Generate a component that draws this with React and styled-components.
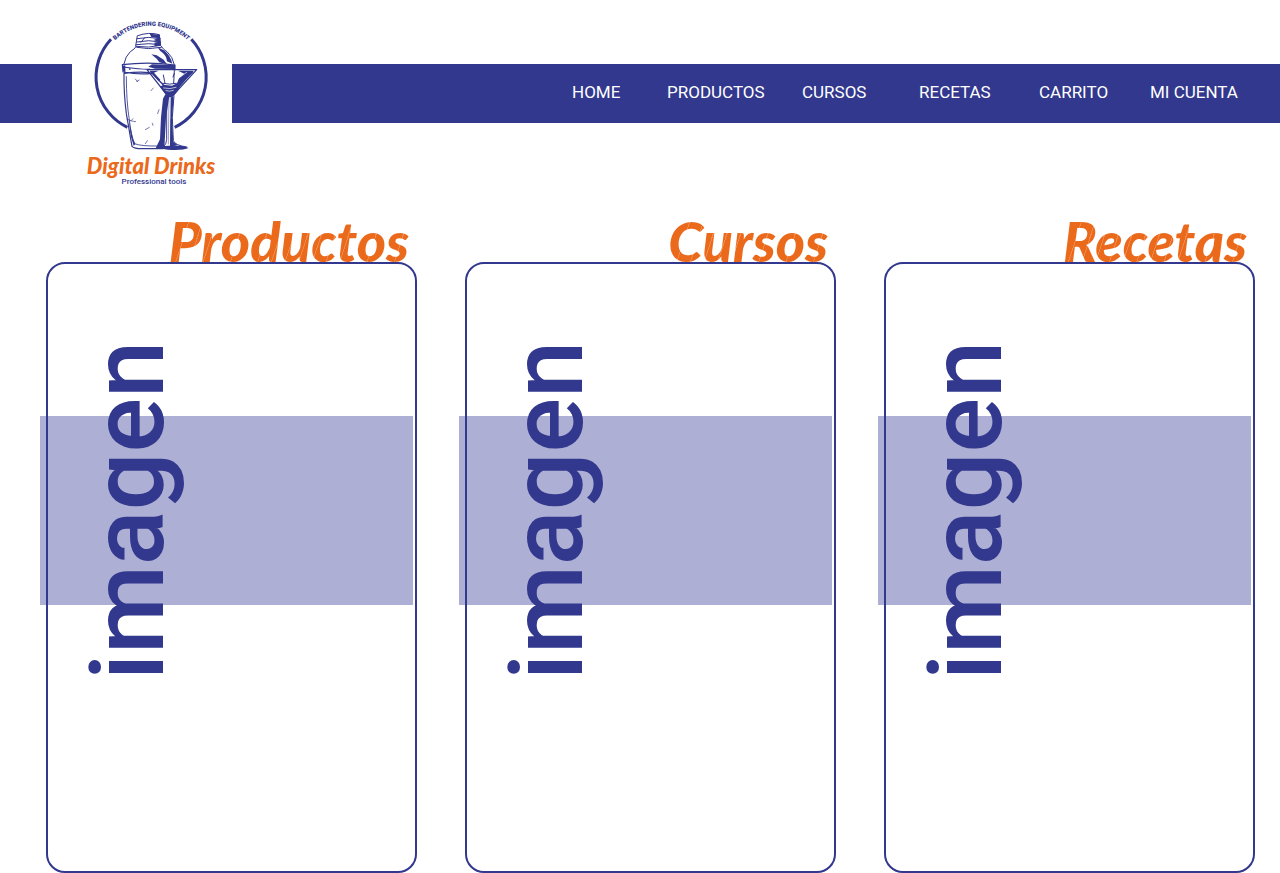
import React from 'react';
import styled, { createGlobalStyle, ThemeProvider } from 'styled-components';

const theme = {
  blue: '#32388d',
  band: '#aeafd4',
  orange: '#eb691b',
  streak: '#f08a4c',
};

const GlobalStyle = createGlobalStyle`
  *, *::before, *::after { box-sizing: border-box; }
  body { margin: 0; background: #fff; font-family: Roboto, "Liberation Sans", sans-serif; }
`;

const Header = styled.header`
  position: relative;
  display: flex;
  justify-content: flex-end;
  align-items: center;
  min-height: 59px;
  margin-top: 64px;
  padding: 0 44px 4px 240px;
  background: ${({ theme }) => theme.blue};
`;

const LogoLink = styled.a`
  position: absolute;
  left: 72px;
  top: -59px;
  width: 160px;
  height: 184px;
  background: #fff;
  svg { display: block; }
`;

const NavList = styled.ul`
  display: grid;
  grid-template-columns: 95px 135px 117px 120px 111px 86px;
  margin: 0;
  padding: 0;
  list-style: none;
`;

const NavLink = styled.a`
  color: #fff;
  font-size: 17px;
  line-height: 24px;
  text-decoration: none;
  white-space: nowrap;
`;

const Main = styled.main`
  display: grid;
  grid-template-columns: repeat(3, 1fr);
  gap: 48px;
  padding: 90px 25px 0 46px;
`;

const Section = styled.section`
  isolation: isolate;
`;

const Title = styled.h2`
  margin: 0 0 -7px;
  padding-right: 8px;
  font: italic 900 56px/56px Lato, "Liberation Sans", sans-serif;
  text-align: right;
  color: transparent;
  background: repeating-linear-gradient(
    108deg,
    ${({ theme }) => theme.orange} 0 8px,
    ${({ theme }) => theme.streak} 8px 9px,
    ${({ theme }) => theme.orange} 9px 13px
  );
  background-clip: text;
  -webkit-background-clip: text;
`;

const Card = styled.div`
  position: relative;
  min-height: 611px;
  padding-top: 152px;
  border: 2px solid ${({ theme }) => theme.blue};
  border-radius: 19px;
`;

const Band = styled.div`
  position: relative;
  z-index: -1;
  display: flex;
  align-items: center;
  height: 189px;
  margin: 0 2px 0 -8px;
  padding-left: 28px;
  background: ${({ theme }) => theme.band};
`;

const Placeholder = styled.span`
  writing-mode: vertical-rl;
  transform: rotate(180deg);
  color: ${({ theme }) => theme.blue};
  font-size: 102px;
  font-weight: 500;
  line-height: 120px;
`;

function Logo() {
  return (
    <svg width="160" height="184" viewBox="0 0 160 184" role="img" aria-label="Digital Drinks">
      <defs>
        <path id="arc" d="M36.7 42.9A52 52 0 0 1 121.9 42.9" />
      </defs>
      <g transform="translate(-2 0) scale(.33333)" fill="none" stroke={theme.blue} strokeLinecap="round" strokeLinejoin="round">
        <path d="M123 103A167 167 0 0 0 172 367M364 103A167 167 0 0 1 314 367" strokeWidth="9" strokeLinecap="butt" />
        <path d="M203 92Q236 80 268 89L272 121Q236 130 198 124ZM201 101Q237 93 271 101M200 111Q237 103 271 111M199 119Q237 113 272 119" strokeWidth="3" />
        <path d="M239 86L269 89L273 122L254 124L253 113L265 110L250 105L264 100L244 96Z" fill={theme.blue} stroke="none" />
        <path d="M213 112L224 98" strokeWidth="3" />
        <path d="M198 125Q195 132 181 140Q166 154 162 176M274 124Q281 135 292 141Q308 155 313 179M200 127Q235 135 274 127" strokeWidth="3" />
        <path d="M263 127L282 136Q301 151 307 176L291 169Q290 150 270 137ZM244 148L260 151L281 164L291 178L268 172L260 161Z" fill={theme.blue} stroke="none" />
        <path d="M157 179Q235 169 315 180L315 194M157 179L159 201Q210 210 245 205M159 186Q231 195 238 192M163 205Q208 199 239 203" strokeWidth="3.5" />
        <path d="M246 178L315 180L315 192L255 191L235 185ZM159 182L166 181L166 202L159 199Z" fill={theme.blue} stroke="none" />
        <circle cx="179" cy="192" r="2" fill={theme.blue} />
        <path d="M162 206Q161 262 169 326L186 424Q192 431 216 431L278 431" strokeWidth="3.5" />
        <path d="M169 215Q169 288 178 345Q184 397 194 416Q212 424 268 423" strokeWidth="2.5" />
        <path d="M176 341L189 401L196 418L191 422L182 392ZM286 268L298 273L288 339L283 430L257 430L270 403L273 337L279 281Z" fill={theme.blue} stroke="none" />
        <path d="M171 342L185 348L197 350M182 348L189 341M196 222L203 230M200 229L208 225M243 257L250 249M226 374L238 367M247 355L249 361M263 326L267 314M226 416L232 407" strokeWidth="2" />
        <path d="M231 194H380L309 271Q301 280 290 269ZM242 200L286 246M368 200L319 249" strokeWidth="4" />
        <path d="M324 197H371L330 245L319 263L308 275L290 272L270 245L280 239L306 242L321 235L327 220L343 206ZM239 197H266L252 203L271 224L266 229Z" fill={theme.blue} stroke="none" />
        <path d="M285 235L280 210M311 235L313 196M313 205L309 216M278 235Q300 240 319 235" strokeWidth="3" />
        <path d="M281 249Q300 254 318 247M288 257Q300 261 310 256M321 223L350 202" stroke="#fff" strokeWidth="2" />
        <path d="M290 273V403Q290 418 279 427M312 272L307 337L310 407Q315 421 350 426" strokeWidth="3" />
        <path d="M302 277L311 275L306 342L310 411L323 420L300 423ZM259 429Q274 421 301 422Q339 420 356 429Q338 437 294 434Z" fill={theme.blue} stroke="none" />
        <path d="M297 277L295 417M302 344V419" strokeWidth="1.5" />
      </g>
      <text fill={theme.blue} fontFamily="Roboto, sans-serif" fontSize="6" fontWeight="900" textAnchor="middle">
        <textPath href="#arc" startOffset="50%">BARTENDERING EQUIPMENT</textPath>
      </text>
      <text x="79" y="169" fill={theme.orange} fontFamily="Lato, sans-serif" fontSize="22" fontStyle="italic" fontWeight="900" textAnchor="middle">Digital Drinks</text>
      <text x="82" y="179" fill={theme.blue} fontFamily="Roboto, sans-serif" fontSize="8" fontWeight="500" textAnchor="middle">Professional tools</text>
    </svg>
  );
}

const links = ['HOME', 'PRODUCTOS', 'CURSOS', 'RECETAS', 'CARRITO', 'MI CUENTA'];
const sections = ['Productos', 'Cursos', 'Recetas'];

export default function App() {
  return (
    <ThemeProvider theme={theme}>
      <GlobalStyle />
      <Header>
        <LogoLink href="#"><Logo /></LogoLink>
        <nav>
          <NavList>
            {links.map((label) => (
              <li key={label}><NavLink href="#">{label}</NavLink></li>
            ))}
          </NavList>
        </nav>
      </Header>
      <Main>
        {sections.map((name) => (
          <Section key={name}>
            <Title>{name}</Title>
            <Card>
              <Band><Placeholder>imagen</Placeholder></Band>
            </Card>
          </Section>
        ))}
      </Main>
    </ThemeProvider>
  );
}
